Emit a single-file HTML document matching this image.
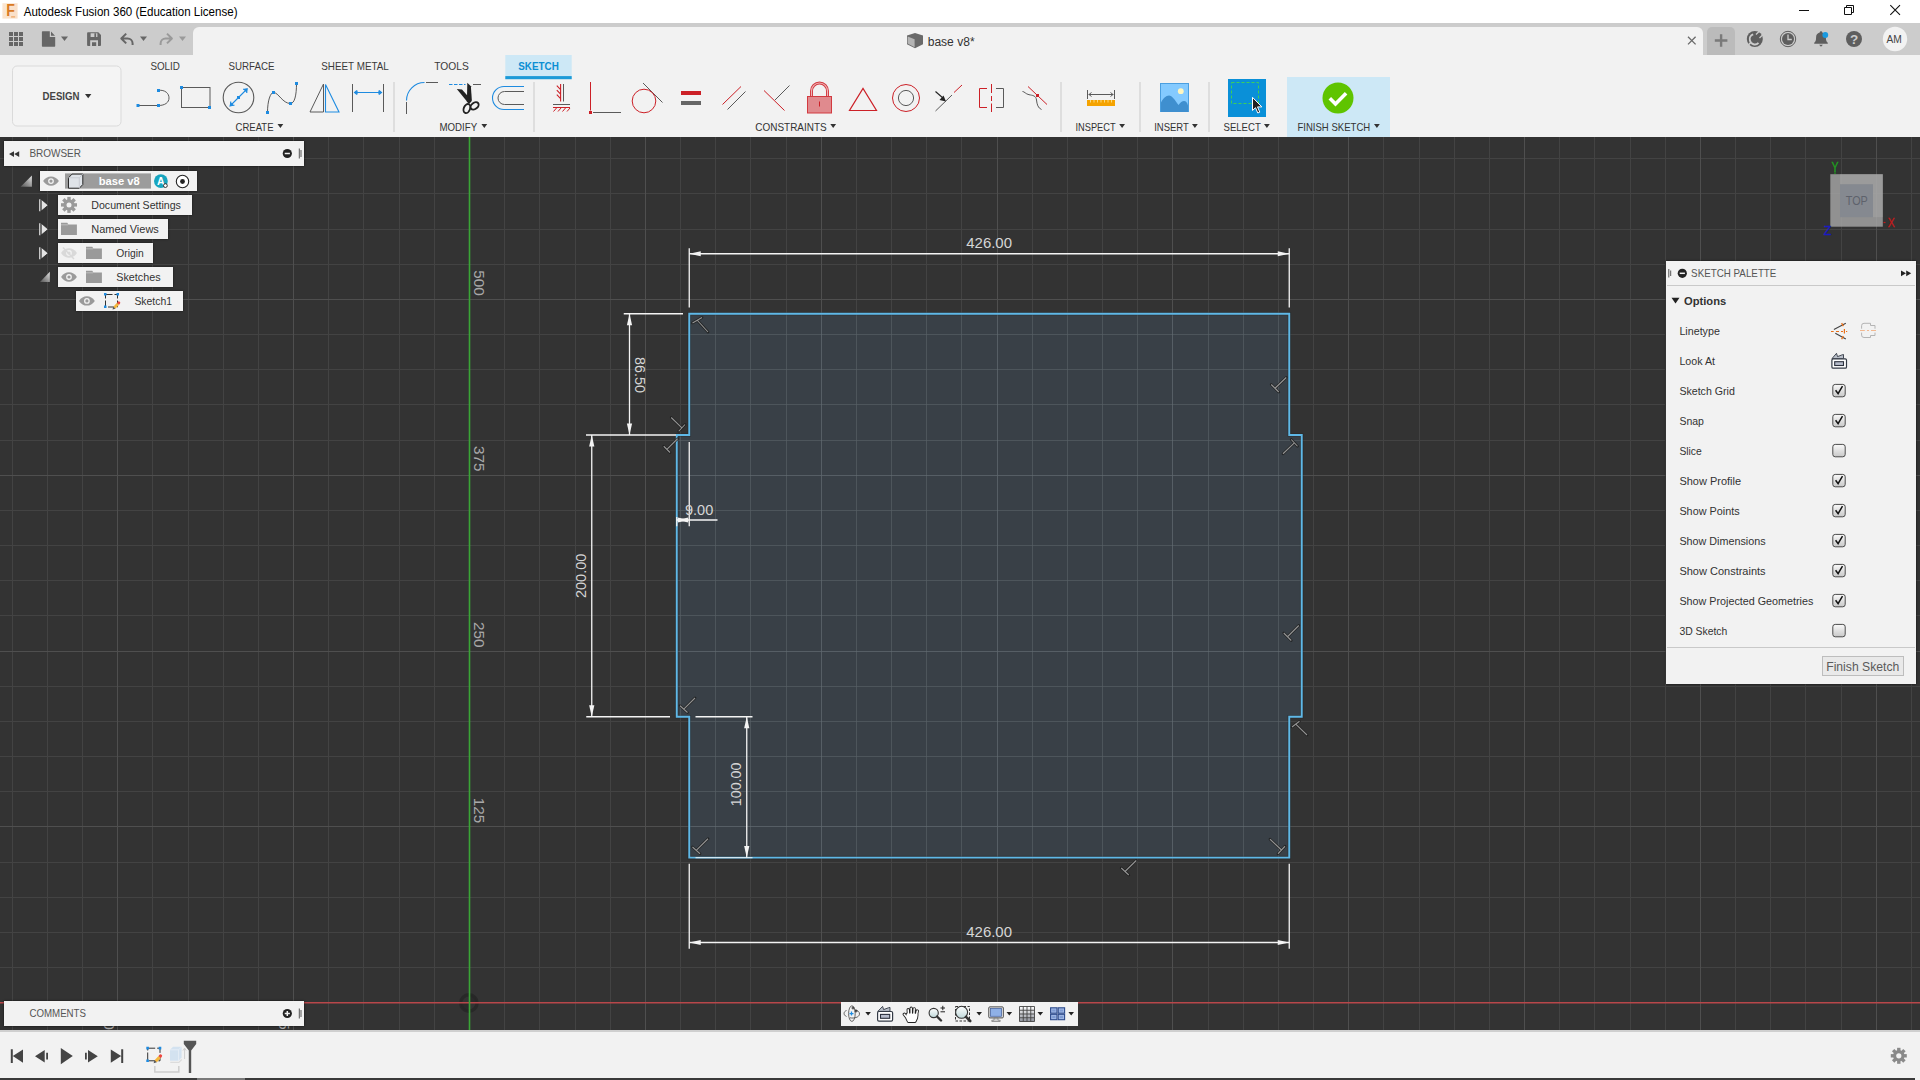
<!DOCTYPE html>
<html lang="en">
<head>
<meta charset="utf-8">
<title>Autodesk Fusion 360 (Education License)</title>
<style>
html,body{margin:0;padding:0;width:1920px;height:1080px;overflow:hidden;background:#f2f2f2;}
body{position:relative;font-family:"Liberation Sans",Arial,sans-serif;}
.a{position:absolute;display:block}
svg{position:absolute;left:0;top:0;overflow:hidden}
svg text{font-family:"Liberation Sans",Arial,sans-serif;}
#titlebar{left:0;top:0;width:1920px;height:23px;background:#ffffff}
#strip{left:0;top:23px;width:1920px;height:32px;background:#cccccc}
#doctab{left:193px;top:27px;width:1510px;height:28px;background:#f2f2f2;border-radius:6px 6px 0 0}
#plusbtn{left:1707px;top:27px;width:28px;height:28px;background:#bbbbbb;border-radius:5px 5px 0 0}
#ribbon{left:0;top:55px;width:1920px;height:82px;background:#f2f2f2}
#canvas{left:0;top:137px;width:1920px;height:893px;background:#333333}
#tlborder{left:0;top:1030px;width:1920px;height:2px;background:#cfcfcf}
#timeline{left:0;top:1032px;width:1920px;height:46px;background:#f2f2f2}
#botstrip{left:0;top:1078px;width:1915px;height:2px;background:#3a3a3a}
#botthumb{left:197px;top:1078px;width:48px;height:2px;background:#7a7a7a}
.panel{background:#f2f2f2}
.row{background:#f2f2f2;height:20px;box-shadow:0 0 2px rgba(0,0,0,.6)}
</style>
</head>
<body>
<div id="titlebar" class="a"></div>
<div id="strip" class="a"></div>
<div id="doctab" class="a"></div>
<div id="plusbtn" class="a"></div>
<div id="ribbon" class="a"></div>
<div id="canvas" class="a"></div>
<svg id="cv" class="a" width="1920" height="1080" viewBox="0 0 1920 1080">
<defs><clipPath id="cvclip"><rect x="0" y="137" width="1920" height="893"/></clipPath><clipPath id="lblclip"><rect x="0" y="1018" width="480" height="12"/></clipPath></defs>
<g clip-path="url(#cvclip)">
<path d="M12.5 137V1030M47.5 137V1030M82.5 137V1030M152.5 137V1030M188.5 137V1030M223.5 137V1030M258.5 137V1030M328.5 137V1030M363.5 137V1030M399.5 137V1030M434.5 137V1030M504.5 137V1030M539.5 137V1030M575.5 137V1030M610.5 137V1030M680.5 137V1030M715.5 137V1030M750.5 137V1030M786.5 137V1030M856.5 137V1030M891.5 137V1030M926.5 137V1030M961.5 137V1030M1032.5 137V1030M1067.5 137V1030M1102.5 137V1030M1137.5 137V1030M1208.5 137V1030M1243.5 137V1030M1278.5 137V1030M1313.5 137V1030M1383.5 137V1030M1419.5 137V1030M1454.5 137V1030M1489.5 137V1030M1559.5 137V1030M1594.5 137V1030M1630.5 137V1030M1665.5 137V1030M1735.5 137V1030M1770.5 137V1030M1805.5 137V1030M1841.5 137V1030M1911.5 137V1030M0 967.5H1920M0 932.5H1920M0 897.5H1920M0 862.5H1920M0 791.5H1920M0 756.5H1920M0 721.5H1920M0 686.5H1920M0 615.5H1920M0 580.5H1920M0 545.5H1920M0 510.5H1920M0 440.5H1920M0 404.5H1920M0 369.5H1920M0 334.5H1920M0 264.5H1920M0 229.5H1920M0 193.5H1920M0 158.5H1920" stroke="#434343" stroke-width="1" fill="none"/>
<path d="M117.5 137V1030M293.5 137V1030M469.5 137V1030M645.5 137V1030M821.5 137V1030M997.5 137V1030M1172.5 137V1030M1348.5 137V1030M1524.5 137V1030M1700.5 137V1030M1876.5 137V1030M0 1002.5H1920M0 826.5H1920M0 651.5H1920M0 475.5H1920M0 299.5H1920" stroke="#4f4f4f" stroke-width="1" fill="none"/>
<circle cx="468.9" cy="1003.0" r="8.2" fill="none" stroke="#262626" stroke-width="3.4" opacity=".75"/>
<path d="M468.9 1003.0v-8.2a8.2 8.2 0 0 1 8.2 8.2zM468.9 1003.0v8.2a8.2 8.2 0 0 1 -8.2 -8.2z" fill="#262626" opacity=".7"/>
<path d="M0 1002.8H1920" stroke="#b8474a" stroke-width="1.6" fill="none"/>
<path d="M469.5 137V1030" stroke="#3aa536" stroke-width="1.6" fill="none"/>
<text transform="translate(474.4 270.3) rotate(90)" font-size="14.5" fill="#a9a9a9" textLength="25.5" lengthAdjust="spacingAndGlyphs">500</text>
<text transform="translate(474.4 446.1) rotate(90)" font-size="14.5" fill="#a9a9a9" textLength="25.5" lengthAdjust="spacingAndGlyphs">375</text>
<text transform="translate(474.4 622.0) rotate(90)" font-size="14.5" fill="#a9a9a9" textLength="25.5" lengthAdjust="spacingAndGlyphs">250</text>
<text transform="translate(474.4 797.8) rotate(90)" font-size="14.5" fill="#a9a9a9" textLength="25.5" lengthAdjust="spacingAndGlyphs">125</text>
<g clip-path="url(#lblclip)"><text transform="translate(103.6 999.3) rotate(90)" font-size="14.5" fill="#a9a9a9" textLength="30.5" lengthAdjust="spacingAndGlyphs">-250</text></g>
<g clip-path="url(#lblclip)"><text transform="translate(279.4 999.3) rotate(90)" font-size="14.5" fill="#a9a9a9" textLength="30.5" lengthAdjust="spacingAndGlyphs">-125</text></g>
<path d="M689.25 313.75L1289.25 313.75L1289.25 435L1301.75 435L1301.75 716.75L1289.25 716.75L1289.25 857.6L689.25 857.6L689.25 716.75L676.75 716.75L676.75 435L689.25 435Z" fill="#56799c" fill-opacity=".2" stroke="none"/>
<clipPath id="prof"><path d="M689.25 313.75L1289.25 313.75L1289.25 435L1301.75 435L1301.75 716.75L1289.25 716.75L1289.25 857.6L689.25 857.6L689.25 716.75L676.75 716.75L676.75 435L689.25 435Z"/></clipPath>
<g clip-path="url(#prof)"><path d="M12.5 137V1030M47.5 137V1030M82.5 137V1030M152.5 137V1030M188.5 137V1030M223.5 137V1030M258.5 137V1030M328.5 137V1030M363.5 137V1030M399.5 137V1030M434.5 137V1030M504.5 137V1030M539.5 137V1030M575.5 137V1030M610.5 137V1030M680.5 137V1030M715.5 137V1030M750.5 137V1030M786.5 137V1030M856.5 137V1030M891.5 137V1030M926.5 137V1030M961.5 137V1030M1032.5 137V1030M1067.5 137V1030M1102.5 137V1030M1137.5 137V1030M1208.5 137V1030M1243.5 137V1030M1278.5 137V1030M1313.5 137V1030M1383.5 137V1030M1419.5 137V1030M1454.5 137V1030M1489.5 137V1030M1559.5 137V1030M1594.5 137V1030M1630.5 137V1030M1665.5 137V1030M1735.5 137V1030M1770.5 137V1030M1805.5 137V1030M1841.5 137V1030M1911.5 137V1030M0 967.5H1920M0 932.5H1920M0 897.5H1920M0 862.5H1920M0 791.5H1920M0 756.5H1920M0 721.5H1920M0 686.5H1920M0 615.5H1920M0 580.5H1920M0 545.5H1920M0 510.5H1920M0 440.5H1920M0 404.5H1920M0 369.5H1920M0 334.5H1920M0 264.5H1920M0 229.5H1920M0 193.5H1920M0 158.5H1920M117.5 137V1030M293.5 137V1030M469.5 137V1030M645.5 137V1030M821.5 137V1030M997.5 137V1030M1172.5 137V1030M1348.5 137V1030M1524.5 137V1030M1700.5 137V1030M1876.5 137V1030M0 1002.5H1920M0 826.5H1920M0 651.5H1920M0 475.5H1920M0 299.5H1920" stroke="#dfeaf5" stroke-opacity=".05" stroke-width="1" fill="none"/></g>
<path d="M689.25 313.75L1289.25 313.75L1289.25 435L1301.75 435L1301.75 716.75L1289.25 716.75L1289.25 857.6L689.25 857.6L689.25 716.75L676.75 716.75L676.75 435L689.25 435Z" fill="none" stroke="#1c1c1c" stroke-width="3.6" stroke-opacity=".3" stroke-linejoin="miter"/>
<path d="M689.25 313.75L1289.25 313.75L1289.25 435L1301.75 435L1301.75 716.75L1289.25 716.75L1289.25 857.6L689.25 857.6L689.25 716.75L676.75 716.75L676.75 435L689.25 435Z" fill="none" stroke="#5fb8e7" stroke-width="1.9" stroke-linejoin="miter"/>
<path d="M689.25 248.25L689.25 307.5" stroke="#f4f4f4" stroke-width="1.3" fill="none"/>
<path d="M1289.25 248.25L1289.25 307.5" stroke="#f4f4f4" stroke-width="1.3" fill="none"/>
<path d="M689.25 253.75L1289.25 253.75" stroke="#f4f4f4" stroke-width="1.3" fill="none"/>
<path d="M689.25 253.75L700.75 251.15L700.75 256.35Z" fill="#f4f4f4"/>
<path d="M1289.25 253.75L1277.75 256.35L1277.75 251.15Z" fill="#f4f4f4"/>
<text x="966.25" y="248" font-size="15" fill="#d6d6d6" textLength="45.75" lengthAdjust="spacingAndGlyphs">426.00</text>
<path d="M689.25 863.75L689.25 948.75" stroke="#f4f4f4" stroke-width="1.3" fill="none"/>
<path d="M1289.25 863.75L1289.25 948.75" stroke="#f4f4f4" stroke-width="1.3" fill="none"/>
<path d="M689.25 942.5L1289.25 942.5" stroke="#f4f4f4" stroke-width="1.3" fill="none"/>
<path d="M689.25 942.5L700.75 939.90L700.75 945.10Z" fill="#f4f4f4"/>
<path d="M1289.25 942.5L1277.75 945.10L1277.75 939.90Z" fill="#f4f4f4"/>
<text x="966.25" y="937" font-size="15" fill="#d6d6d6" textLength="45.75" lengthAdjust="spacingAndGlyphs">426.00</text>
<path d="M623.75 313.75L683 313.75" stroke="#f4f4f4" stroke-width="1.3" fill="none"/>
<path d="M586 435L676 435" stroke="#f4f4f4" stroke-width="1.3" fill="none"/>
<path d="M629.5 313.75L629.5 435" stroke="#f4f4f4" stroke-width="1.3" fill="none"/>
<path d="M629.5 313.75L632.10 325.25L626.90 325.25Z" fill="#f4f4f4"/>
<path d="M629.5 435L626.90 423.50L632.10 423.50Z" fill="#f4f4f4"/>
<text transform="translate(635 357) rotate(90)" font-size="15" fill="#d6d6d6" textLength="36" lengthAdjust="spacingAndGlyphs">86.50</text>
<path d="M586.25 716.75L670 716.75" stroke="#f4f4f4" stroke-width="1.3" fill="none"/>
<path d="M591.75 435L591.75 716.75" stroke="#f4f4f4" stroke-width="1.3" fill="none"/>
<path d="M591.75 435L594.35 446.50L589.15 446.50Z" fill="#f4f4f4"/>
<path d="M591.75 716.75L589.15 705.25L594.35 705.25Z" fill="#f4f4f4"/>
<text transform="translate(586.25 598) rotate(-90)" font-size="15" fill="#d6d6d6" textLength="44.25" lengthAdjust="spacingAndGlyphs">200.00</text>
<path d="M695.5 716.75L752.5 716.75" stroke="#f4f4f4" stroke-width="1.3" fill="none"/>
<path d="M695.5 857.6L752.5 857.6" stroke="#cfe6f2" stroke-width="1.3" fill="none"/>
<path d="M746.75 716.75L746.75 857.6" stroke="#f4f4f4" stroke-width="1.3" fill="none"/>
<path d="M746.75 716.75L749.35 728.25L744.15 728.25Z" fill="#f4f4f4"/>
<path d="M746.75 857.6L744.15 846.10L749.35 846.10Z" fill="#f4f4f4"/>
<text transform="translate(741.25 806.25) rotate(-90)" font-size="15" fill="#d6d6d6" textLength="43.75" lengthAdjust="spacingAndGlyphs">100.00</text>
<path d="M689.25 442L689.25 526.25" stroke="#f4f4f4" stroke-width="1.3" fill="none"/>
<path d="M676.75 517L676.75 526.25" stroke="#f4f4f4" stroke-width="1.3" fill="none"/>
<path d="M676.75 520L717.5 520" stroke="#f4f4f4" stroke-width="1.3" fill="none"/>
<path d="M676.75 520L688.25 517.40L688.25 522.60Z" fill="#f4f4f4"/>
<path d="M689.25 520L677.75 522.60L677.75 517.40Z" fill="#f4f4f4"/>
<text x="685" y="514.5" font-size="15" fill="#d6d6d6" textLength="28.25" lengthAdjust="spacingAndGlyphs">9.00</text>
<path d="M692.5 323L702 317.5M697.25 320.25L708 332M685 424.5L678.75 431.25M681.88 427.88L671.25 417.5M663.75 446.25L670 452.5M666.88 449.38L677.5 438.75M680 705.75L687.5 712.5M683.75 709.12L695 698M692.5 847L700 853.75M696.25 850.38L708 838.75M1271.25 384.5L1278.75 392M1275.00 388.25L1286.25 377.5M1291.25 439.5L1297.5 446.25M1294.38 442.88L1283 453.75M1283.75 633L1291.25 640.5M1287.50 636.75L1298.75 625.5M1292 727L1299.5 721.25M1295.75 724.12L1307 735M1285 846.25L1278 853.75M1281.50 850.00L1270 839.25M1121.25 868L1128.75 875M1125.00 871.50L1136.25 860.5" stroke="#1e1e1e" stroke-width="2.6" fill="none" stroke-linecap="round" opacity=".8"/>
<path d="M692.5 323L702 317.5M697.25 320.25L708 332M685 424.5L678.75 431.25M681.88 427.88L671.25 417.5M663.75 446.25L670 452.5M666.88 449.38L677.5 438.75M680 705.75L687.5 712.5M683.75 709.12L695 698M692.5 847L700 853.75M696.25 850.38L708 838.75M1271.25 384.5L1278.75 392M1275.00 388.25L1286.25 377.5M1291.25 439.5L1297.5 446.25M1294.38 442.88L1283 453.75M1283.75 633L1291.25 640.5M1287.50 636.75L1298.75 625.5M1292 727L1299.5 721.25M1295.75 724.12L1307 735M1285 846.25L1278 853.75M1281.50 850.00L1270 839.25M1121.25 868L1128.75 875M1125.00 871.50L1136.25 860.5" stroke="#949494" stroke-width="1.1" fill="none"/>
</g></svg>
<div id="tlborder" class="a"></div>
<div id="timeline" class="a"></div>
<div id="botstrip" class="a"></div>
<div id="botthumb" class="a"></div>
<svg id="top" class="a" width="1920" height="137" viewBox="0 0 1920 137">
<defs>
<linearGradient id="fg" x1="0" y1="0" x2="1" y2="1"><stop offset="0" stop-color="#fbe6d2"/><stop offset="1" stop-color="#fadfc6"/></linearGradient>
</defs>
<!-- title bar -->
<g id="title">
<rect x="2.400" y="3.200" width="15.200" height="15.400" fill="url(#fg)"/>
<text x="6.200" y="15.600" font-size="15.600" font-weight="bold" fill="#d97a24" textLength="8.600" lengthAdjust="spacingAndGlyphs">F</text>
<rect x="11" y="16.200" width="4.200" height="1.400" rx=".5" fill="#eea868"/>
<text x="23.75" y="16" font-size="12.5" fill="#000" textLength="213.75" lengthAdjust="spacingAndGlyphs">Autodesk Fusion 360 (Education License)</text>
<path d="M1799 10.5h10" stroke="#111" stroke-width="1" fill="none"/>
<path d="M1844.5 7.5h7v7h-7zM1846.5 7.5v-2h7v7h-2" stroke="#111" stroke-width="1" fill="none"/>
<path d="M1890.3 5.2l9.7 9.7M1900 5.2l-9.7 9.7" stroke="#111" stroke-width="1.1" fill="none"/>
</g>
<!-- quick access toolbar -->
<g id="qat" fill="#666666">
<path d="M9 32h4v4h-4zM14 32h4v4h-4zM19 32h4v4h-4zM9 37h4v4h-4zM14 37h4v4h-4zM19 37h4v4h-4zM9 42h4v4h-4zM14 42h4v4h-4zM19 42h4v4h-4z"/>
<path d="M42.6 31.3h7.2v5.6h5.4v9.1a.7.7 0 0 1 -.7.7h-11.9a.7.7 0 0 1 -.7-.7v-14a.7.7 0 0 1 .7-.7zM51 31.6l4 4.1h-4z"/>
<path d="M61 36.4h7l-3.5 4.6z"/>
<path d="M88 32.3h10.3l2.7 2.7v10.1a.9.9 0 0 1 -.9.9h-12.1a.9.9 0 0 1 -.9-.9v-11.9a.9.9 0 0 1 .9-.9z"/>
<path d="M90.6 33.3h6.8v3.8h-6.8zM90.2 40.3h7.8v5.7h-7.8z" fill="#cccccc"/>
<path d="M94.4 33.3h1.7v3.8h-1.7zM92 42.3h4.2v3.7h-4.2z"/>
<path d="M126.2 33.6l-4.9 4.9l4.9 4.9M122 38.5h5.6a5 5 0 0 1 5 5v1.6" fill="none" stroke="#666666" stroke-width="2" stroke-linejoin="round"/>
<path d="M140 36.4h7l-3.5 4.6z"/>
<path d="M167 33.6l4.9 4.9l-4.9 4.9M171.2 38.5h-5.6a5 5 0 0 0 -5 5v1.6" fill="none" stroke="#9a9a9a" stroke-width="2" stroke-linejoin="round"/>
<path d="M179 36.4h7l-3.5 4.6z" fill="#9a9a9a"/>
</g>
<!-- document tab -->
<g id="doc">
<path d="M907 35.6l8-2.6l8 2.6v8.6l-8 4.1l-8-4.1z" fill="#6a6a6a"/>
<path d="M907.6 36.6l7 2.6v8l-7-3.6z" fill="#b4b4b4"/>
<text x="927.7" y="45.5" font-size="12" fill="#333" textLength="46.9" lengthAdjust="spacingAndGlyphs">base v8*</text>
<path d="M1688 36.8l7.6 7.6M1695.6 36.8l-7.6 7.6" stroke="#6a6a6a" stroke-width="1.3" fill="none"/>
<path d="M1714.8 40.5h12.6M1721.1 34.2v12.6" stroke="#7a7a7a" stroke-width="2.4" fill="none"/>
<!-- job status -->
<circle cx="1754.800" cy="39" r="8" fill="#5e5e5e"/>
<path d="M1758.500 42.900a5.100 5.100 0 0 1 -8.600-2.400a5.100 5.100 0 0 1 3.300-6.200" fill="none" stroke="#cccccc" stroke-width="1.900"/>
<path d="M1751 42.300l-2.800 3" stroke="#cccccc" stroke-width="1.500"/>
<path d="M1756 34.500l3.300-3.300M1759.500 38l3.300-3.300" stroke="#cccccc" stroke-width="1.300"/>
<!-- clock -->
<circle cx="1788" cy="39" r="7.7" fill="none" stroke="#5e5e5e" stroke-width="1"/>
<circle cx="1788" cy="39" r="6" fill="#5e5e5e"/>
<path d="M1788 34.6v4.9h3.8" fill="none" stroke="#cccccc" stroke-width="1.3"/>
<!-- bell -->
<path d="M1821 31.2a1.3 1.3 0 0 1 1.3 1.3a4.8 4.8 0 0 1 3.6 4.7c0 3.6.7 4.6 1.9 5.6v.9h-13.6v-.9c1.2-1 1.9-2 1.9-5.6a4.8 4.8 0 0 1 3.6-4.700a1.300 1.300 0 0 1 1.300-1.300zM1819.100 44.800h3.800l-1.900 1.900z" fill="#5e5e5e"/>
<circle cx="1825.300" cy="35" r="2.900" fill="#1a9ae0"/>
<!-- help -->
<circle cx="1854" cy="39" r="8" fill="#5e5e5e"/>
<text x="1854" y="43.900" font-size="13.500" font-weight="bold" fill="#cccccc" text-anchor="middle">?</text>
<!-- avatar -->
<circle cx="1895" cy="39" r="12.200" fill="#f2f2f2"/>
<text x="1886.400" y="42.700" font-size="10.500" fill="#444" textLength="15.300" lengthAdjust="spacingAndGlyphs">AM</text>
</g>
</svg>
<svg id="rib" class="a" width="1920" height="137" viewBox="0 0 1920 137">
<!-- tab highlight + finish sketch highlight -->
<rect x="505.300" y="55" width="66.400" height="24.200" fill="#cde8f6"/>
<rect x="505.300" y="76.100" width="66.400" height="3.100" fill="#1b9ad8"/>
<rect x="1287" y="77" width="103" height="60" fill="#cde8f6"/>
<!-- workspace button -->
<rect x="12.500" y="66" width="108.500" height="60" rx="4.500" fill="#f4f4f4" stroke="#dadada" stroke-width="1"/>
<text x="42.500" y="100" font-size="11.300" font-weight="bold" fill="#444" textLength="37" lengthAdjust="spacingAndGlyphs">DESIGN</text>
<path d="M85 94h6.400l-3.200 4.200z" fill="#333"/>
<!-- tab labels -->
<g font-size="11" fill="#3a3a3a">
<text x="150.400" y="69.800" textLength="29.500" lengthAdjust="spacingAndGlyphs">SOLID</text>
<text x="228.500" y="69.800" textLength="46.100" lengthAdjust="spacingAndGlyphs">SURFACE</text>
<text x="321.300" y="69.800" textLength="67.500" lengthAdjust="spacingAndGlyphs">SHEET METAL</text>
<text x="434.300" y="69.800" textLength="34.500" lengthAdjust="spacingAndGlyphs">TOOLS</text>
<text x="518.300" y="69.800" textLength="40.500" lengthAdjust="spacingAndGlyphs" font-weight="bold" fill="#0b8ed3">SKETCH</text>
</g>
<!-- group labels -->
<g font-size="10.600" fill="#333">
<text x="235.500" y="131" textLength="38" lengthAdjust="spacingAndGlyphs">CREATE</text>
<text x="439.500" y="131" textLength="37.700" lengthAdjust="spacingAndGlyphs">MODIFY</text>
<text x="755.300" y="131" textLength="71.400" lengthAdjust="spacingAndGlyphs">CONSTRAINTS</text>
<text x="1075.500" y="131" textLength="40.100" lengthAdjust="spacingAndGlyphs">INSPECT</text>
<text x="1154.200" y="131" textLength="34.600" lengthAdjust="spacingAndGlyphs">INSERT</text>
<text x="1223.500" y="131" textLength="37.300" lengthAdjust="spacingAndGlyphs">SELECT</text>
<text x="1297.400" y="131" textLength="72.800" lengthAdjust="spacingAndGlyphs">FINISH SKETCH</text>
</g>
<path d="M277.500 124h5.800l-2.900 4zM481.400 124h5.800l-2.900 4zM830.300 124h5.800l-2.900 4zM1119.200 124h5.800l-2.900 4zM1192 124h5.800l-2.900 4zM1264 124h5.800l-2.900 4zM1374 124h5.800l-2.900 4z" fill="#333"/>
<!-- separators -->
<path d="M394 82v50M534 82v50M1061 82v50M1140 82v50M1209 82v50" stroke="#d6d6d6" stroke-width="1.400" fill="none"/>
</svg>
<svg id="ico" class="a" width="1920" height="137" viewBox="0 0 1920 137" fill="none">
<!-- CREATE -->
<g stroke="#5a5a5a" stroke-width="1">
<path d="M138 105.500h20.500M158.500 90.300c6.500-.600 10.500 3 10.500 7.600s-4 7.600-10.500 7.600"/>
<rect x="181.500" y="87.500" width="28.500" height="20"/>
<circle cx="238.500" cy="97.500" r="15.300" stroke-width="1.100"/>
<path d="M267.500 112.500c0-12 3-20 6-20c5 0 9 11 17 11c4 0 6-8 6-20"/>
<path d="M323.500 84v28h-13.500zM352.500 84v28M383.500 84v28"/>
</g>
<g stroke="#1e8be0" stroke-width="1.100">
<path d="M231 105l15.500-15.500M243 89.300h3.800v3.800M230.700 101.500v3.800h3.800"/>
<path d="M325.500 84.500v27.500h13.500z"/>
<path d="M354 92.500h28M357 90.500l-2.500 2l2.500 2M379 90.500l2.500 2l-2.500 2"/>
</g>
<g fill="#1e8be0">
<path d="M136.500 104h3v3h-3zM157 104h3v3h-3zM157 89h3v3h-3zM180 86h3v3h-3zM208 106h3v3h-3zM237 96h3v3h-3zM266 111h3v3h-3zM272 91h3v3h-3zM289 102h3v3h-3zM295 82h3v3h-3z"/>
<path d="M229.300 106.700l1.200-4.600l3.400 3.400zM247.900 88.100l-1.200 4.600l-3.400-3.400zM354 92.500l3.600-2v4zM382 92.500l-3.600-2v4z"/>
</g>
<!-- MODIFY -->
<path d="M406.500 102v12M426 82.500h12M473 84.500h8" stroke="#5a5a5a" stroke-width="1"/>
<path d="M406.500 100.500a18 18 0 0 1 18-18" stroke="#1e8be0" stroke-width="1.100"/>
<path d="M449 84.500h16.500" stroke="#1e8be0" stroke-width="1" stroke-dasharray="3.500 1.500"/>
<g fill="#222">
<path d="M467.300 82.800l3.600 3.400l.9 13.600l-3.200 3.400l-1.700-1.600z"/>
<path d="M456.800 89l5.200.5l10 11.300l-3 3.200z"/>
</g>
<g stroke="#222" stroke-width="1.900">
<ellipse cx="466.900" cy="108.600" rx="3.100" ry="4.700" transform="rotate(22 466.900 108.600)"/>
<ellipse cx="474.600" cy="105.900" rx="4.500" ry="3.100" transform="rotate(-38 474.600 105.900)"/>
</g>
<path d="M524 86.500h-20a11.500 11.500 0 0 0 0 23h20" stroke="#1e8be0" stroke-width="1.100"/>
<path d="M524 91.500h-19.500a6.500 6.500 0 0 0 0 13h19.500" stroke="#5a5a5a" stroke-width="1"/>
<!-- CONSTRAINTS -->
<g stroke="#5a5a5a" stroke-width="1">
<path d="M563.500 84v17.500M553 104.500h17"/>
<path d="M593 112.500h28"/>
<path d="M643 83l19.500 19.500"/>
<path d="M727.500 109.500l18-18"/>
<path d="M775 100l14.500-14.500"/>
<circle cx="906" cy="98" r="7.600"/>
<path d="M935.500 111l16.500-16"/>
<path d="M996 88.500h7.500v19h-7.500"/>
<path d="M1022.500 91.500c2 0 3 2.500 6.500 3.200s7 .8 7.500 5.300s1.500 8 5 9.500"/>
</g>
<g stroke="#cc2027" stroke-width="1">
<path d="M553 107.500h17M556.500 108l-3 3.500M561 108l-3 3.500M565.500 108l-3 3.500M570 108l-3 3.500"/>
<path d="M560.600 89.700l-3.800-4M560.600 94.200l-3.800-4M560.600 98.700l-3.800-4M560.600 84v17.500" stroke-width="1.100"/>
<path d="M590.500 82v28.500"/>
<circle cx="644" cy="101" r="11.800"/>
<path d="M722.500 104.500l18.500-18"/>
<path d="M764 90.500l20.500 20"/>
<path d="M849.500 110.500h27l-13.500-22z" stroke-width="1.200"/>
<circle cx="906" cy="98" r="13.500"/>
<path d="M954 92.500l8-7.500"/>
<path d="M987 88.500h-7.500v19h7.500"/>
<path d="M991.500 84v9M991.500 96v5M991.500 103.500v8.500"/>
<path d="M1028 86.500l19 18"/>
</g>
<rect x="589" y="111" width="3" height="3" fill="#cc2027"/>
<rect x="1036" y="94" width="3" height="3" fill="#cc2027"/>
<rect x="681" y="91" width="20" height="4" fill="#cc2027"/>
<rect x="681" y="101" width="20" height="4" fill="#666"/>
<path d="M811.500 96v-5a8 8 0 0 1 16 0v5" stroke="#d23a40" stroke-width="3"/><path d="M811.500 96v-5a8 8 0 0 1 16 0v5" stroke="#f0b4b7" stroke-width="1.100"/>
<rect x="807.500" y="96.500" width="24" height="16.500" fill="#e08a8e" stroke="#d23a40" stroke-width="1"/>
<path d="M819.500 101.500v5" stroke="#cc2027" stroke-width="1"/>
<path d="M935.500 91.500l8 7" stroke="#222" stroke-width="1.100"/>
<path d="M946 101.500l-6.500-1.500l4-4.500z" fill="#222"/>
<!-- INSPECT -->
<rect x="1087" y="100" width="28" height="6" fill="#f5a300"/>
<path d="M1090.500 100v2.500M1094 100v2.500M1097.500 100v2.500M1101 100v2.500M1104.500 100v2.500M1108 100v2.500M1111.500 100v2.500" stroke="#ffe08a" stroke-width=".9"/>
<path d="M1087.500 90v9M1114.500 90v9M1088.500 94.500h25M1091.500 92.500l-2.500 2l2.500 2M1110.500 92.500l2.500 2l-2.500 2" stroke="#5a5a5a" stroke-width="1"/>
<!-- INSERT -->
<rect x="1160.500" y="83.500" width="28" height="28" fill="#84caff" stroke="#4b9fe0" stroke-width="1"/>
<path d="M1161 112v-9.500c2-4 5-7 8-7s6 4.500 9.500 9.500c2-2.500 3.500-4 5.500-4s3.500 2 4 4.500v6.500z" fill="#3f8fcf"/>
<circle cx="1180.800" cy="91.200" r="2.900" fill="#fff6c0"/>
<!-- SELECT -->
<rect x="1228" y="79" width="38" height="38" fill="#0a90d8"/>
<rect x="1231.500" y="82.500" width="27" height="21" stroke="#3ccf5a" stroke-width="1" stroke-dasharray="3 2"/>
<path d="M1252.500 97.300v13.200l3-2.800l2.300 5.300l2-.9l-2.300-5.200h4.300z" fill="#222" stroke="#fff" stroke-width="1"/>
<!-- FINISH SKETCH -->
<circle cx="1338" cy="98" r="15.500" fill="#5fc400"/>
<path d="M1329.800 98.200l5.700 5.700l10.600-10.600" stroke="#fff" stroke-width="3.600"/>
</svg>
<div id="browser-head" class="a panel" style="left:4px;top:141px;width:300px;height:25px;box-shadow:0 0 2px rgba(0,0,0,.7)"></div>
<div class="a row" style="left:40px;top:171px;width:157px"></div>
<div class="a row" style="left:58px;top:195px;width:134px"></div>
<div class="a row" style="left:58px;top:219px;width:110px"></div>
<div class="a row" style="left:58px;top:243px;width:95px"></div>
<div class="a row" style="left:58px;top:267px;width:115px"></div>
<div class="a row" style="left:76px;top:291px;width:107px"></div>
<svg id="brw" class="a" width="320" height="330" viewBox="0 0 320 330" fill="none">
<defs>
<linearGradient id="tg" x1="0" y1="1" x2="1" y2="0"><stop offset="0" stop-color="#555"/><stop offset=".5" stop-color="#999"/><stop offset="1" stop-color="#e6e6e6"/></linearGradient>
<g id="eye"><path d="M-7.900 0c2-3.200 4.800-4.700 7.900-4.700s5.900 1.500 7.900 4.700c-2 3.200-4.800 4.700-7.900 4.700s-5.900-1.500-7.900-4.700z" fill="#9a9a9a"/><circle r="2.900" fill="#f2f2f2"/><circle r="1.600" fill="#9a9a9a"/></g>
<g id="fold"><path d="M0 0h6.300l1 1.700h8.600v10.600h-15.900z" fill="#9a9a9a"/><path d="M0 2h7" stroke="#cfcfcf" stroke-width=".7"/></g>
<g id="exp"><path d="M.5 -.2v12" stroke="#cfcfcf" stroke-width="1.500"/><path d="M1.900 -.1l7 5.900l-7 5.900z" fill="#e4e4e4" stroke="#1c1c1c" stroke-width=".7"/></g>
</defs>
<!-- header -->
<path d="M14 151.200v5.800l-5-2.900zM19.200 151.200v5.800l-5-2.900z" fill="#333"/>
<text x="29.400" y="156.800" font-size="10.800" fill="#555" textLength="51.600" lengthAdjust="spacingAndGlyphs">BROWSER</text>
<circle cx="287.300" cy="153.500" r="4.600" fill="#222"/><path d="M284.700 153.500h5.200" stroke="#f2f2f2" stroke-width="1.500"/>
<path d="M299.300 148.500v10M301 150v7" stroke="#555" stroke-width="1"/>
<!-- row 1 -->
<path d="M20.600 186.800h11.300v-11.300z" fill="url(#tg)"/>
<use href="#eye" x="51" y="181.100"/>
<rect x="65" y="173.400" width="86" height="15.200" fill="#9c9c9c"/>
<path d="M68.500 177.800l3.500-3.700h10.800v10.400l-3.500 3.700h-10.800z" fill="#dfe3e8" stroke="#2a2a2a" stroke-width="1" stroke-linejoin="round"/>
<path d="M68.500 177.800h10.800v10.400M79.300 177.800l3.500-3.700" stroke="#c6cad0" stroke-width=".9"/>
<text x="98.800" y="184.900" font-size="11.300" font-weight="bold" fill="#fff" textLength="41" lengthAdjust="spacingAndGlyphs">base v8</text>
<circle cx="160.900" cy="181.100" r="6.900" fill="#17a5bf"/>
<text x="157" y="185" font-size="10.500" font-weight="bold" fill="#fff">A</text>
<circle cx="165.400" cy="185.600" r="1.900" fill="#fff" stroke="#222" stroke-width=".9"/>
<circle cx="182.500" cy="181.500" r="6.200" fill="#fff" stroke="#222" stroke-width="1.100"/><circle cx="182.500" cy="181.500" r="2.400" fill="#222"/>
<!-- row 2 -->
<use href="#exp" x="39.300" y="199.400"/>
<g transform="translate(69 204.900)" fill="#9a9a9a"><circle r="5.600"/><g id="teeth"><rect x="-1.700" y="-8" width="3.400" height="16"/><rect x="-1.700" y="-8" width="3.400" height="16" transform="rotate(45)"/><rect x="-1.700" y="-8" width="3.400" height="16" transform="rotate(90)"/><rect x="-1.700" y="-8" width="3.400" height="16" transform="rotate(135)"/></g><circle r="2.500" fill="#f2f2f2"/></g>
<g font-size="10.800" fill="#333">
<text x="91.300" y="208.600" textLength="89.600" lengthAdjust="spacingAndGlyphs">Document Settings</text>
<text x="91.300" y="232.600" textLength="67.500" lengthAdjust="spacingAndGlyphs">Named Views</text>
<text x="116.300" y="256.600" textLength="27.500" lengthAdjust="spacingAndGlyphs">Origin</text>
<text x="116.300" y="280.800" textLength="44.300" lengthAdjust="spacingAndGlyphs">Sketches</text>
<text x="134.400" y="304.500" textLength="37.700" lengthAdjust="spacingAndGlyphs">Sketch1</text>
</g>
<!-- row 3 -->
<use href="#exp" x="39.300" y="223.400"/>
<use href="#fold" x="61" y="222.800"/>
<!-- row 4 -->
<use href="#exp" x="39.300" y="247.400"/>
<g opacity=".28"><use href="#eye" x="69" y="253"/><path d="M63 247.500l11 11.500" stroke="#9a9a9a" stroke-width="1.400"/></g>
<use href="#fold" x="86" y="246.800"/>
<!-- row 5 -->
<path d="M40 282h9.800v-10.200z" fill="url(#tg)"/>
<use href="#eye" x="69" y="277"/>
<use href="#fold" x="86" y="270.800"/>
<!-- row 6 -->
<use href="#eye" x="86.900" y="300.900"/>
<rect x="105.500" y="294.500" width="12" height="12.500" stroke="#333" stroke-width="1" stroke-dasharray="7 2"/>
<path d="M104 293h2.500v2.500h-2.500zM116.500 293h2.500v2.500h-2.500zM104 305.500h2.500v2.500h-2.500z" fill="#1e8be0"/>
<path d="M113.300 306.800l3.700-4l2.100 1.900l-3.700 4z" fill="#f4b63c"/><path d="M117 302.800l.8-.9a1.400 1.400 0 0 1 2.100 1.900l-.8.9z" fill="#f0443c"/><path d="M113.300 306.800l-.8 2.800l2.900-.9z" fill="#555"/>
</svg>
<div id="palette" class="a panel" style="left:1666px;top:261px;width:250px;height:423px;box-shadow:0 0 2px rgba(0,0,0,.7)"></div>
<div class="a" style="left:1667px;top:285px;width:248px;height:1px;background:#c9c9c9"></div>
<div class="a" style="left:1667px;top:647px;width:248px;height:1px;background:#c9c9c9"></div>
<div class="a" style="left:1822px;top:656px;width:82px;height:19.500px;background:#e9e9e9;border:1px solid #bdbdbd;box-sizing:border-box"></div>
<svg id="pal" class="a" style="left:1660px;top:255px" width="260" height="435" viewBox="1660 255 260 435" fill="none">
<defs>
<linearGradient id="cbg" x1="0" y1="0" x2="0" y2="1"><stop offset="0" stop-color="#fafafa"/><stop offset="1" stop-color="#c8c8c8"/></linearGradient>
<g id="cb0"><rect x="-6.200" y="-6.200" width="12.400" height="12.400" rx="2.400" fill="url(#cbg)" stroke="#4a4a4a" stroke-width="1"/></g>
<g id="cb1"><use href="#cb0"/><path d="M-3.400 -.4l2.500 3.400l4.400-7.400" stroke="#111" stroke-width="1.500"/></g>
</defs>
<path d="M1668.800 269v8.500M1670.700 270.500v5.500" stroke="#555" stroke-width="1"/>
<circle cx="1682.300" cy="273.300" r="4.600" fill="#222"/><path d="M1679.700 273.300h5.200" stroke="#f2f2f2" stroke-width="1.500"/>
<text x="1691.100" y="277.300" font-size="10.800" fill="#555" textLength="85.300" lengthAdjust="spacingAndGlyphs">SKETCH PALETTE</text>
<path d="M1901 270.400v5.800l5-2.900zM1906.200 270.400v5.800l5-2.900z" fill="#222"/>
<path d="M1671.500 297.800h8l-4 5.800z" fill="#222"/>
<text x="1684" y="305" font-size="11.300" font-weight="bold" fill="#333" textLength="42.200" lengthAdjust="spacingAndGlyphs">Options</text>
<g font-size="10.800" fill="#333">
<text x="1679.400" y="334.800" textLength="40.500" lengthAdjust="spacingAndGlyphs">Linetype</text>
<text x="1679.400" y="364.800" textLength="35.600" lengthAdjust="spacingAndGlyphs">Look At</text>
<text x="1679.400" y="394.800" textLength="55.400" lengthAdjust="spacingAndGlyphs">Sketch Grid</text>
<text x="1679.400" y="424.800" textLength="24.500" lengthAdjust="spacingAndGlyphs">Snap</text>
<text x="1679.400" y="454.800" textLength="22.400" lengthAdjust="spacingAndGlyphs">Slice</text>
<text x="1679.400" y="484.800" textLength="61.700" lengthAdjust="spacingAndGlyphs">Show Profile</text>
<text x="1679.400" y="514.800" textLength="60.200" lengthAdjust="spacingAndGlyphs">Show Points</text>
<text x="1679.400" y="544.800" textLength="86.200" lengthAdjust="spacingAndGlyphs">Show Dimensions</text>
<text x="1679.400" y="574.800" textLength="86.200" lengthAdjust="spacingAndGlyphs">Show Constraints</text>
<text x="1679.400" y="604.800" textLength="133.900" lengthAdjust="spacingAndGlyphs">Show Projected Geometries</text>
<text x="1679.400" y="634.800" textLength="47.900" lengthAdjust="spacingAndGlyphs">3D Sketch</text>
</g>
<text x="1826.200" y="670.700" font-size="12.800" fill="#5a5a5a" textLength="73.100" lengthAdjust="spacingAndGlyphs">Finish Sketch</text>
<use href="#cb1" x="1839" y="390.600"/>
<use href="#cb1" x="1839" y="420.600"/>
<use href="#cb0" x="1839" y="450.600"/>
<use href="#cb1" x="1839" y="480.600"/>
<use href="#cb1" x="1839" y="510.600"/>
<use href="#cb1" x="1839" y="540.600"/>
<use href="#cb1" x="1839" y="570.600"/>
<use href="#cb1" x="1839" y="600.600"/>
<use href="#cb0" x="1839" y="630.600"/>
<!-- linetype icons -->
<path d="M1833.900 329.600l11.900-6.300M1835.300 333.300l10.500 5.800" stroke="#444" stroke-width="1.100"/>
<g stroke="#e8701a" stroke-width="1.200">
<path d="M1831 331.500h2.700M1836 331.500h3M1841 331.500h2M1844.400 329v4.600M1846 331.500h1.200"/>
<path d="M1841.600 323.200l1.800 3M1843.400 336.200l-1.800 3" stroke-width="1.300"/>
</g>
<path d="M1861.600 328.700v-3a2.400 2.400 0 0 1 2.400-2.400h6.500v2.200h4.500v3.200M1861.600 332.600v2.500a2.400 2.400 0 0 0 2.400 2.400h6.500v-2h4.500v-2.900" stroke="#b4b4b4" stroke-width="1"/>
<path d="M1860 330.500h4.800M1867 330.500h2M1871 330.500h5" stroke="#f2b890" stroke-width="1.100"/>
<!-- look at -->
<path d="M1832 358.600l4.500-5.300l1 3.300l4.500-1.700l1.500-.400v4.100z" fill="#b9bfc9" stroke="#333a45" stroke-width=".9"/>
<rect x="1831.900" y="358.800" width="14.600" height="9.400" rx="1.300" fill="#fff" stroke="#333a45" stroke-width="1.200"/>
<rect x="1834.700" y="361.700" width="8.800" height="3.800" fill="#b6bccb" stroke="#2c313d" stroke-width="1.100"/>
</svg>
<svg id="vc" class="a" style="left:1810px;top:150px" width="110" height="100" viewBox="1810 150 110 100" fill="none">
<rect x="1830.300" y="174.200" width="52.500" height="52.500" fill="#a6a6a6" fill-opacity=".82"/>
<rect x="1840" y="174.200" width="42.800" height="43" fill="#b0b0b0" fill-opacity=".35"/>
<rect x="1840" y="184.200" width="33" height="33" fill="#7f848d" fill-opacity=".8"/>
<text x="1845.800" y="205.300" font-size="13.200" fill="#5e626c" textLength="22" lengthAdjust="spacingAndGlyphs">TOP</text>
<text x="1831.500" y="171.600" font-size="14" fill="#1fa01f" stroke="#1fa01f" stroke-width=".35" textLength="7" lengthAdjust="spacingAndGlyphs">Y</text>
<text x="1887.800" y="227" font-size="13.500" fill="#c41a1a" stroke="#c41a1a" stroke-width=".35" textLength="7" lengthAdjust="spacingAndGlyphs">X</text>
<text x="1823.800" y="234.700" font-size="13.500" fill="#1a1ac4" stroke="#1a1ac4" stroke-width=".35" textLength="7.500" lengthAdjust="spacingAndGlyphs">Z</text>
<path d="M1883.500 222.500h2" stroke="#c41a1a" stroke-width="1.200"/>
<path d="M1835 172.500v1.500" stroke="#1fa01f" stroke-width="1.200"/>
</svg>
<div id="comments" class="a panel" style="left:4px;top:1001px;width:300px;height:25px;box-shadow:0 0 2px rgba(0,0,0,.7)"></div>
<div id="navbar" class="a panel" style="left:841px;top:1002px;width:237px;height:24px"></div>
<svg id="bot" class="a" style="top:990px" width="1920" height="90" viewBox="0 990 1920 90" fill="none">
<defs>
<linearGradient id="gg" x1="0" y1="0" x2="0" y2="1"><stop offset="0" stop-color="#ffffff"/><stop offset="1" stop-color="#8e929c"/></linearGradient>
<linearGradient id="lens" x1="0" y1="0" x2="0" y2="1"><stop offset="0" stop-color="#ffffff"/><stop offset="1" stop-color="#bfd8da"/></linearGradient>
</defs>
<!-- comments -->
<text x="29.500" y="1017" font-size="10.800" fill="#555" textLength="56.500" lengthAdjust="spacingAndGlyphs">COMMENTS</text>
<circle cx="287.300" cy="1013.500" r="4.600" fill="#222"/><path d="M284.700 1013.500h5.200M287.300 1010.900v5.200" stroke="#f2f2f2" stroke-width="1.500"/>
<path d="M299.300 1008.500v10M301 1010v7" stroke="#555" stroke-width="1"/>
<!-- navbar icons -->
<g stroke="#555" stroke-width=".9">
<ellipse cx="851.900" cy="1013.600" rx="3.300" ry="7.800"/>
<path d="M846.500 1010.500c-3 1-3.500 4.500 0 6M850 1017.800c4 .8 9-.4 9.500-3.600c.3-2.400-2-3.800-4.500-4.200"/>
</g>
<path d="M849.500 1013.600h4M851.500 1011.600v4" stroke="#1e8be0" stroke-width="1.300"/>
<path d="M853 1006.500v3M851.500 1008h3M856 1009.500v3M854.500 1011h3" stroke="#222" stroke-width=".9"/>
<path d="M865.300 1011.900h5.600l-2.800 3.700zM976.400 1011.900h5.600l-2.800 3.700zM1006.500 1011.900h5.600l-2.800 3.700zM1037.500 1011.900h5.600l-2.800 3.700zM1068.400 1011.900h5.600l-2.800 3.700z" fill="#222"/>
<!-- look at -->
<path d="M877.800 1011.400l4.800-5l1 3.200l4.800-1.800l1.600-.400v4z" fill="#b9bfc9" stroke="#333a45" stroke-width=".9"/>
<rect x="877.600" y="1011.500" width="15" height="9.600" rx="1.300" fill="#fff" stroke="#333a45" stroke-width="1.200"/>
<rect x="880.500" y="1014.400" width="9.200" height="3.900" fill="#b6bccb" stroke="#2c313d" stroke-width="1.100"/>
<!-- hand -->
<g stroke-linecap="round" stroke-linejoin="round">
<path d="M908.500 1015l-.300-5.300M911.200 1015v-6.800M913.900 1015l.300-6.200M916.300 1016l1-5M907.600 1018.500l-3.300-4.200M907.400 1014.200l9.500.400l-.500 3.400l-1.500 3.300h-6.400l-1.600-3.300z" stroke="#222" stroke-width="3.300" fill="#222"/>
<path d="M908.500 1015l-.300-5.300M911.200 1015v-6.800M913.900 1015l.300-6.200M916.300 1016l1-5M907.600 1018.500l-3.300-4.200M907.400 1014.200l9.500.400l-.500 3.400l-1.500 3.300h-6.400l-1.600-3.300z" stroke="#fff" stroke-width="1.500" fill="#fff"/>
</g>
<!-- zoom -->
<circle cx="933.700" cy="1013" r="4.600" fill="url(#lens)" stroke="#333" stroke-width="1.100"/>
<path d="M937 1016.500l4 4" stroke="#333" stroke-width="2.400" stroke-linecap="round"/>
<path d="M940.500 1008h4.500M942.800 1005.800v4.400M940.500 1011.800h4.500" stroke="#222" stroke-width="1"/>
<!-- zoom window -->
<rect x="955.500" y="1006.500" width="14" height="14.500" stroke="#333" stroke-width="1" stroke-dasharray="2.500 1.500"/>
<circle cx="961.600" cy="1012.300" r="6" fill="url(#lens)" stroke="#333" stroke-width="1.100"/>
<path d="M966 1016.800l4.200 4.200" stroke="#333" stroke-width="2.600" stroke-linecap="round"/>
<!-- display -->
<rect x="988.800" y="1006.900" width="14.500" height="11" rx="1" fill="#f4f4f4" stroke="#444" stroke-width="1"/>
<rect x="990.500" y="1008.500" width="11" height="7.800" fill="#8fb0e6" stroke="#4a66a0" stroke-width=".8"/>
<path d="M994 1018.200h4v2h2.200v1.300h-8.400v-1.300h2.200z" fill="#cfcfcf" stroke="#666" stroke-width=".6"/>
<!-- grid -->
<rect x="1019.500" y="1006.500" width="15" height="15" fill="url(#gg)"/>
<path d="M1019.500 1006.500h15v15h-15zM1023.250 1006.500v15M1027 1006.500v15M1030.750 1006.500v15M1019.500 1010.250h15M1019.500 1014h15M1019.500 1017.750h15" stroke="#444" stroke-width=".9"/>
<!-- viewports -->
<g fill="#9db5e4" stroke="#2c4a8c" stroke-width="1.100">
<rect x="1050.600" y="1007.800" width="6.400" height="5.400"/><rect x="1058.200" y="1007.800" width="6.400" height="5.400"/>
<rect x="1050.600" y="1014.300" width="6.400" height="5.400"/><rect x="1058.200" y="1014.300" width="6.400" height="5.400"/>
</g>
<g fill="#7d9ad2"><rect x="1052.200" y="1009.600" width="3.200" height="1.900"/><rect x="1059.800" y="1009.600" width="3.200" height="1.900"/><rect x="1052.200" y="1016.100" width="3.200" height="1.900"/><rect x="1059.800" y="1016.100" width="3.200" height="1.900"/></g>
<!-- timeline controls -->
<g fill="#444">
<path d="M10.800 1049.200h2v13.800h-2zM23 1049.400v13.400l-10.200-6.700z"/>
<path d="M35 1056.200l9.700-6.200v12.400zM46.200 1052.800h1.800v6.700h-1.800z"/>
<path d="M60.800 1048l12 8.100l-12 8.100z"/>
<path d="M85 1052.800h1.800v6.700h-1.800zM88 1050v12.400l9.800-6.200z"/>
<path d="M110.800 1049.400v13.400l10.400-6.700zM121.200 1049.200h2v13.800h-2z"/>
</g>
<!-- timeline sketch feature -->
<rect x="147.700" y="1048.200" width="12.300" height="12.600" stroke="#333" stroke-width="1" stroke-dasharray="7.500 2"/>
<path d="M146.300 1046.800h2.600v2.600h-2.600zM158.700 1046.800h2.600v2.600h-2.600zM146.300 1059.500h2.600v2.600h-2.600z" fill="#1e8be0"/>
<path d="M154.500 1060.200l4-4.300l2.300 2.100l-4 4.300z" fill="#f4b63c"/><path d="M158.500 1055.900l.9-1a1.550 1.550 0 0 1 2.300 2.100l-.9 1z" fill="#f0443c"/><path d="M154.500 1060.200l-.9 3l3.200-.9z" fill="#555"/>
<!-- faded body -->
<path d="M170 1049.800l3-3h8.600v10.800l-3 3.200h-8.600z" fill="#d3e2f0"/>
<path d="M170 1049.800h8.600v11M178.600 1049.800l3-3" stroke="#e6eef6" stroke-width=".9"/>
<path d="M170.300 1062.300h8.600l2.800-2.800" stroke="#dcdcdc" stroke-width="1.200"/>
<path d="M184.600 1059v-10.500M183 1050.500l1.600-2.300l1.600 2.300" stroke="#cfcfcf" stroke-width="1"/>
<path d="M154.800 1066v6h24v-6" stroke="#cdcdcd" stroke-width="1.500"/>
<!-- marker -->
<path d="M183.800 1040.800h12.400v3.200l-5 6.500v22.500h-2.400v-22.500l-5-6.500z" fill="#555"/>
<!-- settings gear -->
<g transform="translate(1898.800 1055.800)" fill="#8a8a8a"><circle r="5.700"/><rect x="-1.700" y="-8" width="3.400" height="16"/><rect x="-1.700" y="-8" width="3.400" height="16" transform="rotate(45)"/><rect x="-1.700" y="-8" width="3.400" height="16" transform="rotate(90)"/><rect x="-1.700" y="-8" width="3.400" height="16" transform="rotate(135)"/><circle r="2.600" fill="#f2f2f2"/></g>
</svg>
</body>
</html>
